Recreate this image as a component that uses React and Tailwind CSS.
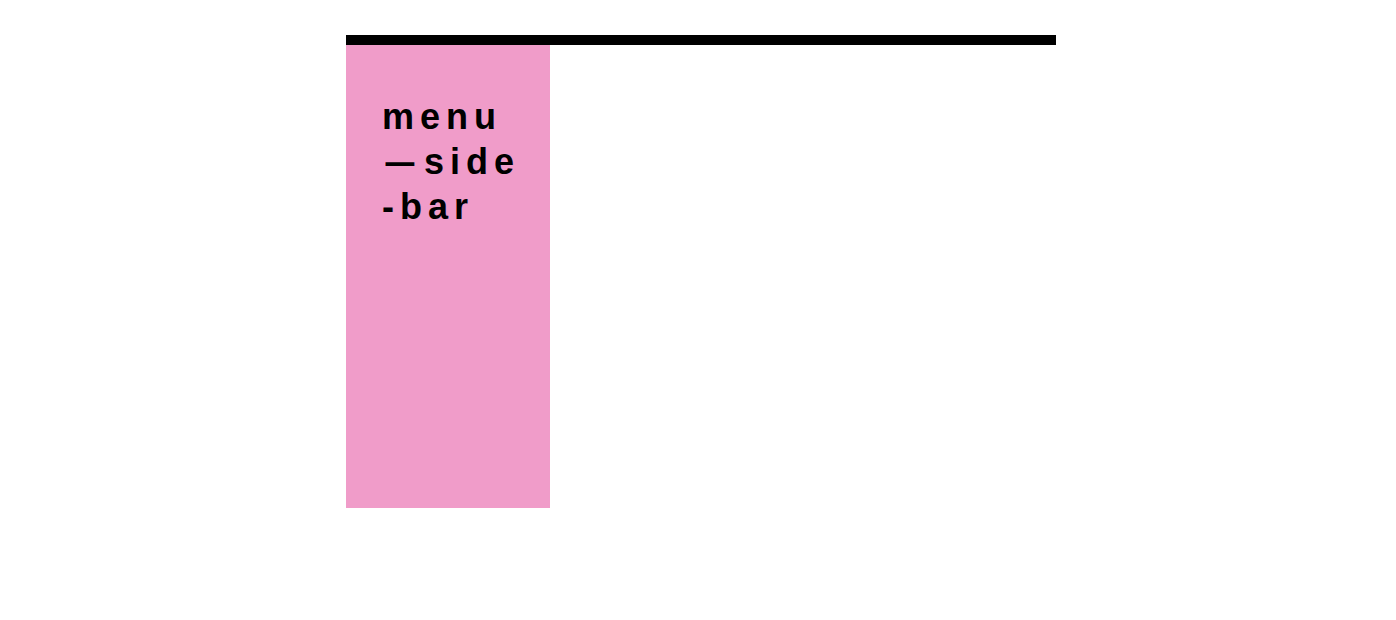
export default function App() {
  return (
    <div className="min-h-[620px] bg-white pt-[35px]" style={{ fontFamily: '"Liberation Sans", Arial, sans-serif' }}>
      <div className="ml-[346px] w-[710px]">
        <div className="h-[10px] bg-black" />
        <div className="flex">
          <div className="w-[204px] h-[463px] bg-[#f09cc9] pl-[36px] pt-[49px]">
            <div className="text-[36px] leading-[45px] font-bold tracking-[6px] text-black">
              <div>menu</div>
              <div>
                <span className="inline-block scale-x-[0.8] tracking-normal mr-[6px]">—</span>side
              </div>
              <div>-bar</div>
            </div>
          </div>
          <div className="flex-1" />
        </div>
      </div>
    </div>
  );
}
